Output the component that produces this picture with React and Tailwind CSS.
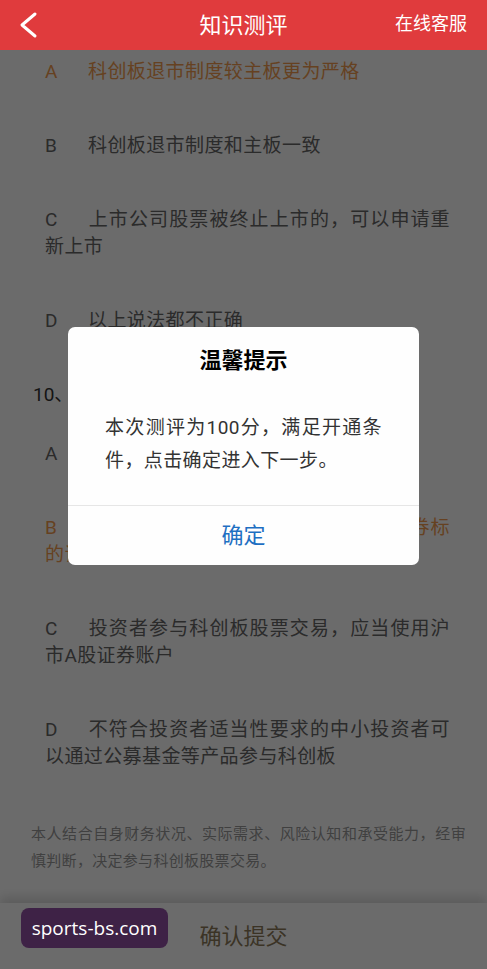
import React from 'react';

const font = "font-['Roboto','Noto_Sans_CJK_SC',sans-serif]";

function Option({ letter, text, active, className = '' }) {
  return (
    <div
      className={`flex flex-wrap pl-[45px] pr-[37px] text-[19px] leading-[27px] tracking-[0.4px] ${
        active ? 'text-[#f29c50]' : 'text-[#666]'
      } ${className}`}
    >
      <p className="text-justify">
        <span className="inline-block w-[43px]">{letter}</span>
        {text}
      </p>
    </div>
  );
}

function Header() {
  return (
    <header className="relative z-20 h-[50px] shrink-0 bg-[#e03b3d] flex items-center justify-center text-white">
      <button className="absolute left-[16px] top-[10px] w-[24px] h-[30px] flex items-center justify-center">
        <svg width="20" height="28" viewBox="0 0 20 28" fill="none">
          <path d="M17 3 L4 14 L17 25" stroke="white" strokeWidth="3" strokeLinecap="round" strokeLinejoin="round" />
        </svg>
      </button>
      <h1 className="text-[22px] leading-[28px] mt-[1px]">知识测评</h1>
      <span className="absolute right-[20px] top-[11px] text-[18px] leading-[26px]">在线客服</span>
    </header>
  );
}

function Dialog() {
  return (
    <div className="w-[351px] h-[238px] bg-[#fefefe] rounded-[7px] flex flex-col overflow-hidden">
      <h2 className="pt-[20px] text-center text-[22px] leading-[28px] font-bold text-black">温馨提示</h2>
      <p className="mt-[36px] px-[37px] text-[19px] leading-[33px] tracking-[0.4px] text-justify text-[#333]">
        本次测评为100分，满足开通条件，点击确定进入下一步。
      </p>
      <div className="mt-auto h-[60px] border-t border-[#e6e6e6] flex items-center justify-center">
        <button className="text-[22px] leading-[28px] text-[#1e6fc2]">确定</button>
      </div>
    </div>
  );
}

export default function App() {
  return (
    <div className={`relative h-screen w-full overflow-hidden bg-white flex flex-col ${font}`}>
      <Header />

      <main className="flex-1 overflow-hidden pt-[8px]">
        <Option letter="A" text="科创板退市制度较主板更为严格" active className="mb-[47px]" />
        <Option letter="B" text="科创板退市制度和主板一致" className="mb-[47px]" />
        <Option letter="C" text="上市公司股票被终止上市的，可以申请重新上市" className="mb-[47px]" />
        <Option letter="D" text="以上说法都不正确" className="mb-[47px]" />

        <p className="pl-[33px] pr-[30px] text-[19px] leading-[27px] text-[#333] mb-[32px]">
          10、关于科创板，以下说法错误的是
        </p>
        <Option letter="A" text="科创板股票交易实行竞价交易" className="mb-[47px]" />
        <Option letter="B" text="科创板股票上市首日起可作为融资融券标的证券" active className="mb-[47px]" />
        <Option letter="C" text="投资者参与科创板股票交易，应当使用沪市A股证券账户" className="mb-[47px]" />
        <Option letter="D" text="不符合投资者适当性要求的中小投资者可以通过公募基金等产品参与科创板" />

        <p className="mt-[51px] pl-[31px] pr-[21px] text-[15px] leading-[27px] tracking-[0.3px] text-justify text-[#999]">
          本人结合自身财务状况、实际需求、风险认知和承受能力，经审慎判断，决定参与科创板股票交易。
        </p>
      </main>

      <footer className="h-[66px] shrink-0 bg-white shadow-[0_-6px_10px_rgba(0,0,0,0.14)] flex items-center justify-center">
        <button className="text-[22px] leading-[28px] mt-[2px] text-[#8c7b5a]">确认提交</button>
      </footer>

      <div className="absolute inset-x-0 top-[50px] bottom-0 z-10 bg-black/[0.58]" />

      <div className="absolute inset-x-0 top-[327px] z-20 flex justify-center">
        <Dialog />
      </div>

      <div className="absolute left-[21px] bottom-[21px] z-30 w-[147px] h-[40px] rounded-[8px] bg-[#3e2246] flex items-center justify-center">
        <span className="font-['Open_Sans',sans-serif] text-[19px] text-white">sports-bs.com</span>
      </div>
    </div>
  );
}
